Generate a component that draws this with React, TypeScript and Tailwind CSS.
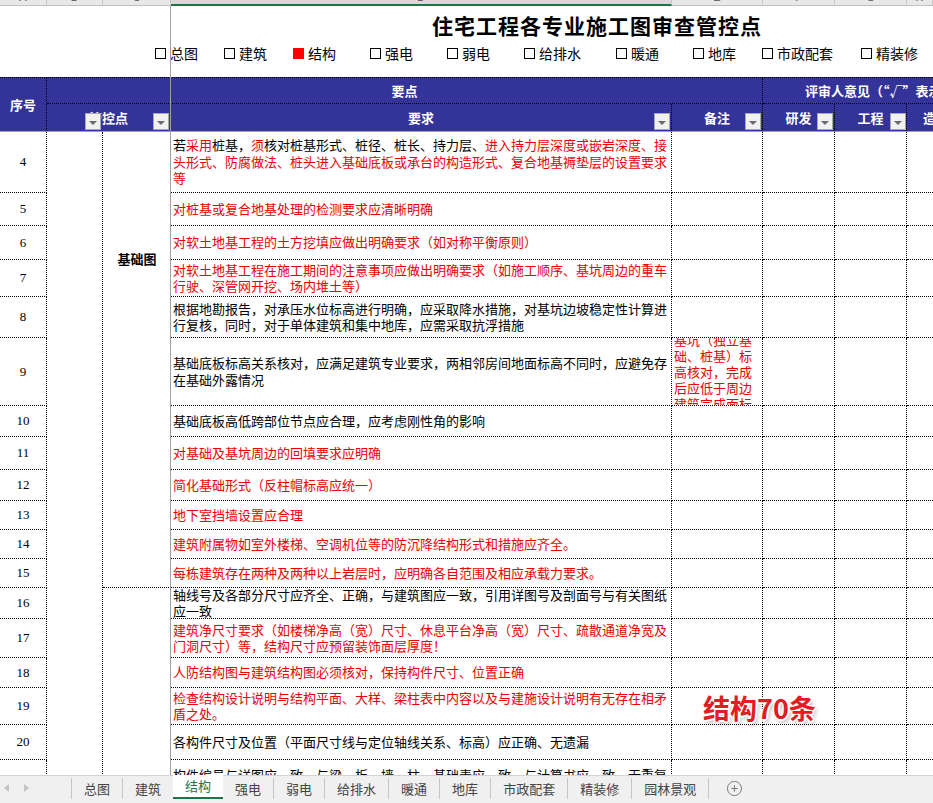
import React from 'react';
import { CirclePlus } from 'lucide-react';

type Seg = [string, boolean];
type Line = string | Seg[];

interface Row {
  no: number;
  lines: Line[];
  red?: boolean;
  note?: string[];
}

const rows: Row[] = [
  {
    no: 4,
    red: true,
    lines: [
      [
        ['若', false],
        ['采用', true],
        ['桩基，', false],
        ['须', true],
        ['核对桩基形式、桩径、桩长、持力层、', false],
        ['进入持力层深度或嵌岩深度、接', true],
      ],
      '头形式、防腐做法、桩头进入基础底板或承台的构造形式、复合地基褥垫层的设置要求',
      '等',
    ],
  },
  { no: 5, red: true, lines: ['对桩基或复合地基处理的检测要求应清晰明确'] },
  { no: 6, red: true, lines: ['对软土地基工程的土方挖填应做出明确要求（如对称平衡原则）'] },
  {
    no: 7,
    red: true,
    lines: ['对软土地基工程在施工期间的注意事项应做出明确要求（如施工顺序、基坑周边的重车', '行驶、深管网开挖、场内堆土等）'],
  },
  {
    no: 8,
    lines: ['根据地勘报告，对承压水位标高进行明确，应采取降水措施，对基坑边坡稳定性计算进', '行复核，同时，对于单体建筑和集中地库，应需采取抗浮措施'],
  },
  {
    no: 9,
    lines: ['基础底板标高关系核对，应满足建筑专业要求，两相邻房间地面标高不同时，应避免存', '在基础外露情况'],
    note: ['基坑（独立基', '础、桩基）标', '高核对，完成', '后应低于周边', '建筑完成面标'],
  },
  { no: 10, lines: ['基础底板高低跨部位节点应合理，应考虑刚性角的影响'] },
  { no: 11, red: true, lines: ['对基础及基坑周边的回填要求应明确'] },
  { no: 12, red: true, lines: ['简化基础形式（反柱帽标高应统一）'] },
  { no: 13, red: true, lines: ['地下室挡墙设置应合理'] },
  { no: 14, red: true, lines: ['建筑附属物如室外楼梯、空调机位等的防沉降结构形式和措施应齐全。'] },
  { no: 15, red: true, lines: ['每栋建筑存在两种及两种以上岩层时，应明确各自范围及相应承载力要求。'] },
  {
    no: 16,
    lines: ['轴线号及各部分尺寸应齐全、正确，与建筑图应一致，引用详图号及剖面号与有关图纸', '应一致'],
  },
  {
    no: 17,
    red: true,
    lines: ['建筑净尺寸要求（如楼梯净高（宽）尺寸、休息平台净高（宽）尺寸、疏散通道净宽及', '门洞尺寸）等，结构尺寸应预留装饰面层厚度！'],
  },
  { no: 18, red: true, lines: ['人防结构图与建筑结构图必须核对，保持构件尺寸、位置正确'] },
  {
    no: 19,
    red: true,
    lines: ['检查结构设计说明与结构平面、大样、梁柱表中内容以及与建施设计说明有无存在相矛', '盾之处。'],
  },
  { no: 20, lines: ['各构件尺寸及位置（平面尺寸线与定位轴线关系、标高）应正确、无遗漏'] },
  {
    no: 21,
    lines: ['构件编号与详图应一致，与梁、板、墙、柱、基础表应一致，与计算书应一致，无重复', '编号'],
  },
];

const checks = [
  { t: '总图', w: 'w-[69px]' },
  { t: '建筑', w: 'w-[69px]' },
  { t: '结构', w: 'w-[77px]', on: true },
  { t: '强电', w: 'w-[77px]' },
  { t: '弱电', w: 'w-[77px]' },
  { t: '给排水', w: 'w-[92px]' },
  { t: '暖通', w: 'w-[77px]' },
  { t: '地库', w: 'w-[69px]' },
  { t: '市政配套', w: 'w-[99px]' },
  { t: '精装修', w: 'w-[72px]' },
];

const tabs = ['总图', '建筑', '结构', '强电', '弱电', '给排水', '暖通', '地库', '市政配套', '精装修', '园林景观'];

const letters = ['A', 'B', 'C', 'D', 'E', 'F', 'G', 'H'];

const FilterBtn = ({ pos }: { pos: string }) => (
  <span className={`absolute bottom-[1px] flex h-[17px] w-[16px] items-end justify-center border border-[#a8a8a8] bg-[#f1f1f1] pb-[4px] ${pos}`}>
    <span className="h-0 w-0 border-x-[4px] border-t-[4px] border-x-transparent border-t-[#6a6a6a]" />
  </span>
);

const RED = 'text-[#ee0000]';

const App: React.FC = () => {
  return (
    <div className="relative flex h-[803px] w-[933px] flex-col overflow-hidden bg-white font-['Noto_Sans_CJK_SC',sans-serif] text-[13px] text-black">
      {/* column letters (mostly scrolled off) */}
      <div className="grid h-[6px] shrink-0 grid-cols-[47px_56px_68px_501px_91px_72px_72px_1fr]">
        {letters.map((l) => (
          <div
            key={l}
            className={`relative overflow-hidden border-r border-[#c8c8c8] ${l === 'D' ? 'border-b-2 border-b-[#217346] bg-[#d9d9d9]' : 'border-b border-b-[#c0c0c0] bg-[#e8e8e8]'}`}
          >
            <span className="absolute inset-x-0 top-[-9px] text-center font-['Liberation_Sans',sans-serif] text-[11px] leading-[12px] text-[#555]">{l}</span>
          </div>
        ))}
      </div>

      {/* title + checkboxes */}
      <div className="h-[71px] shrink-0 pt-[4px]">
        <div className="pl-[432px] text-[21px] font-bold leading-[30px] tracking-[1px] whitespace-nowrap">住宅工程各专业施工图审查管控点</div>
        <div className="mt-[3px] flex pl-[155px] text-[14px] leading-[20px] whitespace-nowrap">
          {checks.map((c) => (
            <div key={c.t} className={`flex shrink-0 items-center ${c.w}`}>
              <span className={`mr-[4px] h-[11px] w-[11px] ${c.on ? 'bg-[#ff0000]' : 'border border-black'}`} />
              <span>{c.t}</span>
            </div>
          ))}
        </div>
      </div>

      {/* blue header */}
      <div className="shrink-0 border-t border-dotted border-black bg-[#333399] text-[13px] font-bold text-white">
        <div className="grid h-[53px] grid-cols-[47px_56px_68px_501px_91px_72px_72px_1fr] grid-rows-[26px_27px]">
          <div className="row-span-2 flex items-center justify-center border-r border-dotted border-black">序号</div>
          <div className="col-span-4 flex items-center justify-center border-r border-b border-dotted border-black">要点</div>
          <div className="col-span-3 flex items-center overflow-hidden border-b border-dotted border-black pl-[42px] whitespace-nowrap">
            评审人意见（“√”表示通过，“×”表示不通过）
          </div>
          <div className="relative col-span-2 flex items-center justify-center border-r border-dotted border-black">
            管控点
            <FilterBtn pos="right-[69px]" />
            <FilterBtn pos="right-[1px]" />
          </div>
          <div className="relative flex items-center justify-center border-r border-dotted border-black">
            要求
            <FilterBtn pos="right-[1px]" />
          </div>
          <div className="relative flex items-center justify-center border-r border-dotted border-black">
            备注
            <FilterBtn pos="right-[1px]" />
          </div>
          <div className="relative flex items-center justify-center border-r border-dotted border-black">
            研发
            <FilterBtn pos="right-[1px]" />
          </div>
          <div className="relative flex items-center justify-center border-r border-dotted border-black">
            工程
            <FilterBtn pos="right-[0px]" />
          </div>
          <div className="flex items-center overflow-hidden pl-[16px] whitespace-nowrap">造价</div>
        </div>
      </div>
      <div className="h-px shrink-0 bg-[#a0a0a0]" />

      {/* body rows */}
      <div className="min-h-0 flex-1 overflow-hidden">
        <div className="grid grid-cols-[47px_56px_68px_501px_91px_72px_72px_1fr] grid-rows-[61px_33px_34px_37px_41px_68px_31px_33px_31px_29px_29px_29px_31px_39px_30px_37px_35px_48px]">
          {rows.map((r, i) => (
            <React.Fragment key={r.no}>
              <div className="flex items-center justify-center border-r border-b border-dotted border-black font-['Liberation_Serif',serif] text-[13px]">
                {r.no}
              </div>
              {i === 0 && <div className="row-span-18 border-r border-dotted border-black" />}
              {i === 0 && (
                <div className="row-span-12 border-b border-dotted border-black pt-[119px] text-center font-bold leading-[16px]">基础图</div>
              )}
              {i === 12 && <div className="row-span-6" />}
              <div className="flex flex-col justify-center overflow-hidden border-r border-b border-dotted border-black pl-[2px] leading-[16.5px] whitespace-nowrap">
                {r.lines.map((ln, k) =>
                  typeof ln === 'string' ? (
                    <div key={k} className={r.red ? RED : ''}>
                      {ln}
                    </div>
                  ) : (
                    <div key={k}>
                      {ln.map(([t, red], j) => (
                        <span key={j} className={red ? RED : ''}>
                          {t}
                        </span>
                      ))}
                    </div>
                  ),
                )}
              </div>
              <div className={`flex flex-col justify-center overflow-hidden border-r border-b border-dotted border-black pl-[2px] leading-[16px] whitespace-nowrap ${RED}`}>
                {r.note?.map((n) => <div key={n}>{n}</div>)}
              </div>
              <div className="border-r border-b border-dotted border-black" />
              <div className="border-r border-b border-dotted border-black" />
              <div className="border-b border-dotted border-black" />
            </React.Fragment>
          ))}
        </div>
      </div>

      {/* sheet tabs */}
      <div className="flex h-[28px] shrink-0 items-start border-t border-[#d4d4d4] bg-[#f0f0f0] text-[13px] leading-[16px] text-[#444]">
        <div className="flex h-[24px] w-[71px] shrink-0 items-center gap-[15px] pl-[4px]">
          <span className="h-0 w-0 border-y-[4px] border-r-[5px] border-y-transparent border-r-[#c4c4c4]" />
          <span className="h-0 w-0 border-y-[4px] border-l-[5px] border-y-transparent border-l-[#c4c4c4]" />
        </div>
        {tabs.map((t, i) =>
          i === 2 ? (
            <div key={t} className="-mt-px flex h-[24px] items-center border-b-2 border-[#217346] bg-white px-[12px] text-[#217346]">
              {t}
            </div>
          ) : (
            <div key={t} className={`mt-[2px] flex h-[21px] items-center px-[12px] whitespace-nowrap ${i === 3 ? '' : 'border-l border-[#c6c6c6]'}`}>
              {t}
            </div>
          ),
        )}
        <div className="mt-[2px] h-[21px] border-l border-[#c6c6c6]" />
        <CirclePlus className="mt-[4px] ml-[17px]" size={17} strokeWidth={1.4} color="#7a7a7a" />
      </div>

      {/* frozen pane divider */}
      <div className="pointer-events-none absolute top-[6px] left-[170px] h-[769px] w-px bg-[#a0a0a0]" />

      {/* stamp overlay */}
      <div className="pointer-events-none absolute top-[693px] left-[703px] text-[27px] font-bold leading-[30px] text-[#e31b23] [text-shadow:1px_1px_0_#fff,-1px_-1px_0_#fff,1px_-1px_0_#fff,-1px_1px_0_#fff,0_2px_0_#fff,2px_0_0_#fff,2px_3px_4px_rgba(0,0,0,0.35)]">
        结构70条
      </div>
    </div>
  );
};

export default App;
